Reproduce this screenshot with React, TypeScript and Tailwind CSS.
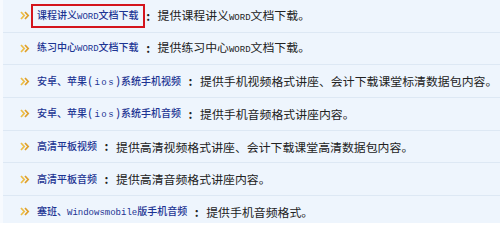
import React from 'react'

type Part = string | { latin: string } | { paren: string }

const ios: Part[] = [{ paren: '(' }, { latin: 'ios' }, { paren: ')' }]

const rows: { link: Part[]; desc: Part[] }[] = [
  { link: ['课程讲义', { latin: 'WORD' }, '文档下载'], desc: ['提供课程讲义', { latin: 'WORD' }, '文档下载。'] },
  { link: ['练习中心', { latin: 'WORD' }, '文档下载'], desc: ['提供练习中心', { latin: 'WORD' }, '文档下载。'] },
  { link: ['安卓、苹果', ...ios, '系统手机视频'], desc: ['提供手机视频格式讲座、会计下载课堂标清数据包内容。'] },
  { link: ['安卓、苹果', ...ios, '系统手机音频'], desc: ['提供手机音频格式讲座内容。'] },
  { link: ['高清平板视频'], desc: ['提供高清视频格式讲座、会计下载课堂高清数据包内容。'] },
  { link: ['高清平板音频'], desc: ['提供高清音频格式讲座内容。'] },
  { link: ['塞班、', { latin: 'Windowsmobile' }, '版手机音频'], desc: ['提供手机音频格式。'] },
]

function Text({ parts }: { parts: Part[] }) {
  return (
    <>
      {parts.map((p, i) => {
        if (typeof p === 'string') return <span key={i}>{p}</span>
        if ('paren' in p)
          return (
            <span key={i} className="mx-[1px] text-[11px]">
              {p.paren}
            </span>
          )
        return (
          <span
            key={i}
            className={`font-['Liberation_Mono'] text-[9px] ${p.latin === 'ios' ? 'tracking-[1.5px] pl-[1.5px]' : ''}`}
          >
            {p.latin}
          </span>
        )
      })}
    </>
  )
}

function Chevron() {
  return (
    <svg width="10" height="9" viewBox="0 0 10 9" className="shrink-0">
      <polyline points="1,1 4.2,4.5 1,8" fill="none" stroke="#edbd45" strokeWidth="1.7" />
      <polyline points="5,1 8.2,4.5 5,8" fill="none" stroke="#df9f2a" strokeWidth="1.7" />
    </svg>
  )
}

export default function App() {
  return (
    <div
      className="w-[500px] h-[223px] overflow-hidden bg-[#eef5fd] border-l-[3px] border-[#f7fafe]"
      style={{ fontFamily: '"Noto Sans CJK SC", "Noto Sans", sans-serif' }}
    >
      {rows.map((r, i) => (
        <div
          key={i}
          className="h-[32.67px] flex items-center border-b border-[#dde8f4] pl-[17px] whitespace-nowrap"
        >
          <Chevron />
          <a
            className={`ml-[7px] text-[10px] leading-none font-medium text-[#1c3493] ${
              i === 0 ? 'outline-2 outline-[#d4151d] outline-offset-[4px]' : ''
            }`}
          >
            <Text parts={r.link} />
          </a>
          <span className="w-[19px] text-[12px] leading-none font-bold text-[#222] text-center">:</span>
          <span className="text-[11.9px] leading-none text-[#222]">
            <Text parts={r.desc} />
          </span>
        </div>
      ))}
    </div>
  )
}
